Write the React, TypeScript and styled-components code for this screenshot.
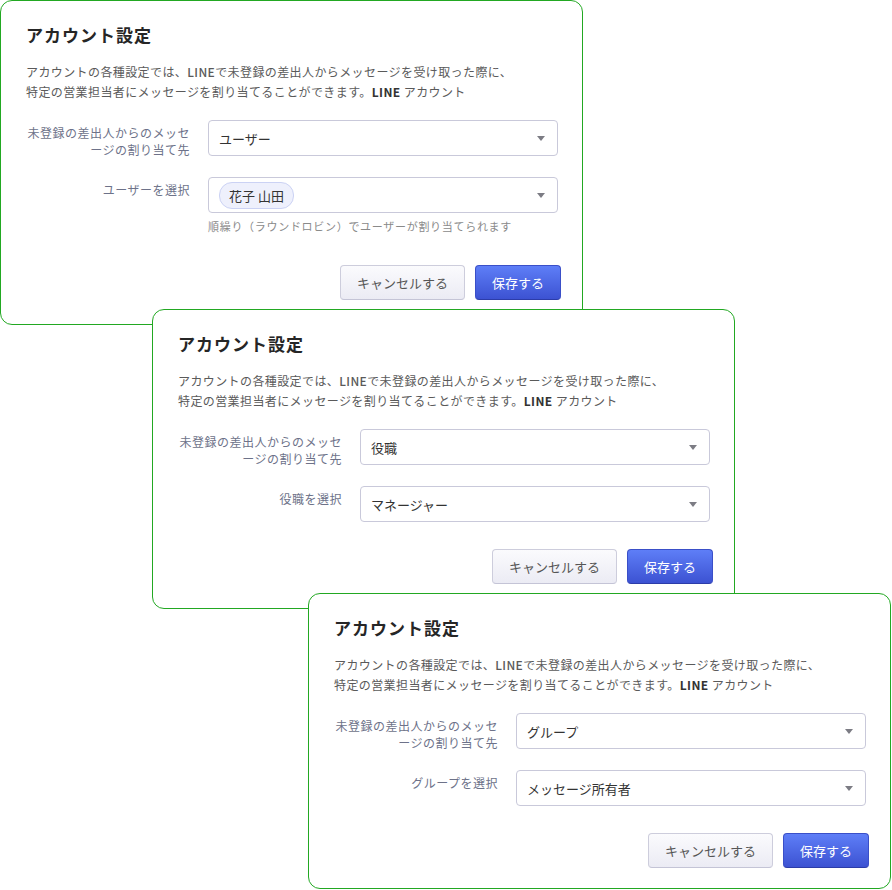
import { FC } from 'react';
import styled, { createGlobalStyle } from 'styled-components';

const GlobalStyle = createGlobalStyle`
  body {
    margin: 0;
    background: #fff;
    font-family: 'Noto Sans CJK JP', 'Noto Sans', sans-serif;
  }
`;

const Stack = styled.div`
  display: flex;
  flex-direction: column;
  align-items: flex-start;
  width: 892px;
`;

const Card = styled.section<{ $offset: number; $bottom: number }>`
  position: relative;
  box-sizing: border-box;
  width: 583px;
  margin-left: ${({ $offset }) => $offset}px;
  padding: 22px 21px ${({ $bottom }) => $bottom}px 25px;
  background: #fff;
  border: 1px solid #22a822;
  border-radius: 12px;

  & + & {
    margin-top: -16px;
  }
`;

const Title = styled.h2`
  margin: 0;
  font-size: 17px;
  line-height: 24px;
  letter-spacing: 1px;
  font-weight: 700;
  color: #262626;
`;

const Description = styled.p`
  margin: 15px 0 0;
  font-size: 12px;
  line-height: 20px;
  letter-spacing: 0.4px;
  color: #5a5a5a;

  b {
    font-weight: 500;
  }
  strong {
    font-weight: 700;
    color: #333;
  }
`;

const Form = styled.div`
  display: flex;
  flex-direction: column;
  gap: 19px;
  margin-top: 18px;
`;

const Row = styled.div`
  display: grid;
  grid-template-columns: 164px 350px;
  column-gap: 18px;
`;

const Label = styled.label`
  padding-top: 4px;
  font-size: 12px;
  line-height: 17px;
  letter-spacing: 0.5px;
  color: #6d7289;
  text-align: right;
`;

const Field = styled.div`
  display: flex;
  flex-direction: column;
`;

const Select = styled.div`
  box-sizing: border-box;
  display: flex;
  align-items: center;
  height: 36px;
  padding: 0 9px 0 10px;
  border: 1px solid #c9c9da;
  border-radius: 4px;
  background: #fff;
  font-size: 13px;
  color: #333;
`;

const Value = styled.span`
  flex: 1;
`;

const Chip = styled.span`
  display: inline-flex;
  align-items: center;
  height: 25px;
  padding: 0 9px;
  border: 1px solid #cbd2f4;
  border-radius: 13px;
  background: #eef0fc;
  font-size: 13px;
  color: #333;
`;

const Caret = styled.span`
  width: 0;
  height: 0;
  margin-right: 3px;
  border-left: 4px solid transparent;
  border-right: 4px solid transparent;
  border-top: 5px solid #7c7c84;
`;

const Hint = styled.div`
  margin: 6px 0 4px;
  font-size: 11px;
  line-height: 15px;
  letter-spacing: 0.7px;
  color: #8a8a8a;
`;

const Footer = styled.div`
  display: flex;
  justify-content: flex-end;
  gap: 10px;
  margin-top: 27px;
`;

const Button = styled.button<{ $primary?: boolean }>`
  box-sizing: border-box;
  width: ${({ $primary }) => ($primary ? '86px' : '125px')};
  height: 35px;
  padding: 0;
  border-radius: 4px;
  font-family: inherit;
  font-size: 13px;
  cursor: pointer;
  border: 1px solid ${({ $primary }) => ($primary ? '#3a4fc8' : '#cdcddc')};
  border-bottom-color: ${({ $primary }) => ($primary ? '#2c3ca8' : '#c4c4d6')};
  background: ${({ $primary }) =>
    $primary
      ? 'linear-gradient(#5e7ef7, #3c52d2)'
      : 'linear-gradient(#fbfbfd, #ebebf4)'};
  color: ${({ $primary }) => ($primary ? '#fff' : '#555')};
`;

type Setting = {
  offset: number;
  bottom: number;
  first: string;
  secondLabel: string;
  second?: string;
  chip?: string;
  hint?: string;
};

const settings: Setting[] = [
  {
    offset: 0,
    bottom: 24,
    first: 'ユーザー',
    secondLabel: 'ユーザーを選択',
    chip: '花子 山田',
    hint: '順繰り（ラウンドロビン）でユーザーが割り当てられます',
  },
  { offset: 152, bottom: 24, first: '役職', secondLabel: '役職を選択', second: 'マネージャー' },
  { offset: 308, bottom: 20, first: 'グループ', secondLabel: 'グループを選択', second: 'メッセージ所有者' },
];

const SettingCard: FC<{ s: Setting }> = ({ s }) => (
  <Card $offset={s.offset} $bottom={s.bottom}>
    <Title>アカウント設定</Title>
    <Description>
      アカウントの各種設定では、<b>LINE</b>で未登録の差出人からメッセージを受け取った際に、
      <br />
      特定の営業担当者にメッセージを割り当てることができます。<strong>LINE</strong> アカウント
    </Description>
    <Form>
      <Row>
        <Label>未登録の差出人からのメッセージの割り当て先</Label>
        <Field>
          <Select>
            <Value>{s.first}</Value>
            <Caret />
          </Select>
        </Field>
      </Row>
      <Row>
        <Label>{s.secondLabel}</Label>
        <Field>
          <Select>
            <Value>{s.chip ? <Chip>{s.chip}</Chip> : s.second}</Value>
            <Caret />
          </Select>
          {s.hint && <Hint>{s.hint}</Hint>}
        </Field>
      </Row>
    </Form>
    <Footer>
      <Button>キャンセルする</Button>
      <Button $primary>保存する</Button>
    </Footer>
  </Card>
);

const App: FC = () => (
  <>
    <GlobalStyle />
    <Stack>
      {settings.map((s) => (
        <SettingCard key={s.offset} s={s} />
      ))}
    </Stack>
  </>
);

export default App;
